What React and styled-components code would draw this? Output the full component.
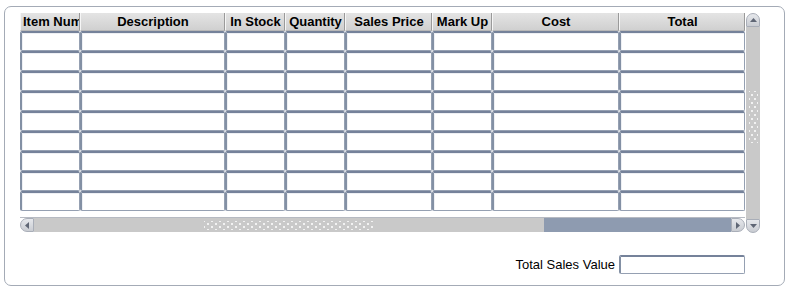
import styled, { createGlobalStyle } from 'styled-components';

const GlobalStyle = createGlobalStyle`
  html, body {
    margin: 0;
    padding: 0;
    background: #ffffff;
    font-family: "Liberation Sans", Arial, sans-serif;
  }
`;

const Panel = styled.div`
  box-sizing: border-box;
  margin: 6px 0 0 4px;
  width: 781px;
  height: 280px;
  border: 1px solid #a4abb6;
  border-radius: 7px;
  padding: 6px 0 0 15px;
`;

const GridArea = styled.div`
  display: flex;
  align-items: flex-start;
`;

const TableColumn = styled.div`
  display: flex;
  flex-direction: column;
  width: 725px;
`;

const HeaderRow = styled.div`
  display: flex;
  height: 18px;
`;

const HeaderCell = styled.div`
  box-sizing: border-box;
  width: ${(p) => p.w}px;
  height: 18px;
  padding: 0 1px 0 2px;
  background: linear-gradient(#e4e4e4, #d0d0d0);
  border-left: 1px solid #f6f6f6;
  border-right: 1px solid #9a9a9a;
  border-bottom: 1px solid #b8b8b8;
  font-size: 13px;
  font-weight: bold;
  color: #000;
  line-height: 17px;
  text-align: center;
  white-space: nowrap;
  overflow: hidden;
`;

const Row = styled.div`
  display: flex;
  height: 20px;
`;

const Cell = styled.div`
  box-sizing: border-box;
  width: ${(p) => p.w}px;
  height: 20px;
  background: #ffffff;
  border: 1px solid #95a0b2;
  border-top: 2px solid #75829a;
  border-left: 2px solid #8390a4;
  border-radius: 2px;
  box-shadow: inset 1px 1px 0 #eef0f4;
`;

const HScroll = styled.div`
  display: flex;
  height: 14px;
  margin-top: 6px;
  border-top: 1px solid #b6bac2;
`;

const ArrowButton = styled.div`
  box-sizing: border-box;
  width: 14px;
  height: 14px;
  display: flex;
  align-items: center;
  justify-content: center;
  background: linear-gradient(#e6e8ec, #c9ccd2);
  border: 1px solid #a9aeb8;
  border-radius: ${(p) => p.radius};
  flex-shrink: 0;
`;

const HThumb = styled.div`
  width: 510px;
  background: #c9c9c9;
  display: flex;
  align-items: center;
  justify-content: center;
`;

const Grip = styled.div`
  width: ${(p) => p.w}px;
  height: ${(p) => p.h}px;
  background-image: radial-gradient(circle, #f2f2f2 0.9px, transparent 1.2px),
    radial-gradient(circle, #f2f2f2 0.9px, transparent 1.2px);
  background-size: 8px 6px;
  background-position: 0 0, 4px 3px;
`;

const HTrack = styled.div`
  flex: 1;
  background: #8e9bb0;
`;

const VScroll = styled.div`
  display: flex;
  flex-direction: column;
  width: 14px;
  height: 220px;
  margin-left: 1px;
`;

const VThumb = styled.div`
  flex: 1;
  background: #c9c9c9;
  display: flex;
  align-items: center;
  justify-content: center;
  padding-bottom: 12px;
`;

const VGrip = styled(Grip)`
  background-size: 6px 8px;
  background-position: 0 0, 3px 4px;
`;

const Footer = styled.div`
  display: flex;
  justify-content: flex-end;
  align-items: center;
  width: 725px;
  margin-top: 22px;
  gap: 4px;
`;

const Label = styled.span`
  font-size: 13px;
  color: #000;
`;

const TotalBox = styled.div`
  box-sizing: border-box;
  width: 126px;
  height: 19px;
  background: #fff;
  border: 1px solid #95a0b2;
  border-top: 2px solid #75829a;
  border-left: 2px solid #8390a4;
  border-radius: 2px;
`;

const Tri = ({ dir }) => {
  const pts = {
    up: '1,6 4.5,2 8,6',
    down: '1,2 4.5,6 8,2',
    left: '6,1 2,4.5 6,8',
    right: '2,1 6,4.5 2,8',
  };
  return (
    <svg width="9" height="9" viewBox="0 0 9 9">
      <polygon points={pts[dir]} fill="#5f6675" />
    </svg>
  );
};

const columns = [
  { name: 'Item Num', w: 60 },
  { name: 'Description', w: 145 },
  { name: 'In Stock', w: 60 },
  { name: 'Quantity', w: 60 },
  { name: 'Sales Price', w: 87 },
  { name: 'Mark Up', w: 60 },
  { name: 'Cost', w: 127 },
  { name: 'Total', w: 126 },
];

const rows = Array.from({ length: 9 }, (_, i) => i);

export default function App() {
  return (
    <>
      <GlobalStyle />
      <Panel>
        <GridArea>
          <TableColumn>
            <HeaderRow>
              {columns.map((c) => (
                <HeaderCell key={c.name} w={c.w}>
                  {c.name}
                </HeaderCell>
              ))}
            </HeaderRow>
            {rows.map((r) => (
              <Row key={r}>
                {columns.map((c) => (
                  <Cell key={c.name} w={c.w} />
                ))}
              </Row>
            ))}
            <HScroll>
              <ArrowButton radius="7px 0 0 7px">
                <Tri dir="left" />
              </ArrowButton>
              <HThumb>
                <Grip w={170} h={9} />
              </HThumb>
              <HTrack />
              <ArrowButton radius="0 7px 7px 0">
                <Tri dir="right" />
              </ArrowButton>
            </HScroll>
          </TableColumn>
          <VScroll>
            <ArrowButton radius="7px 7px 0 0">
              <Tri dir="up" />
            </ArrowButton>
            <VThumb>
              <VGrip w={9} h={52} />
            </VThumb>
            <ArrowButton radius="0 0 7px 7px">
              <Tri dir="down" />
            </ArrowButton>
          </VScroll>
        </GridArea>
        <Footer>
          <Label>Total Sales Value</Label>
          <TotalBox />
        </Footer>
      </Panel>
    </>
  );
}
